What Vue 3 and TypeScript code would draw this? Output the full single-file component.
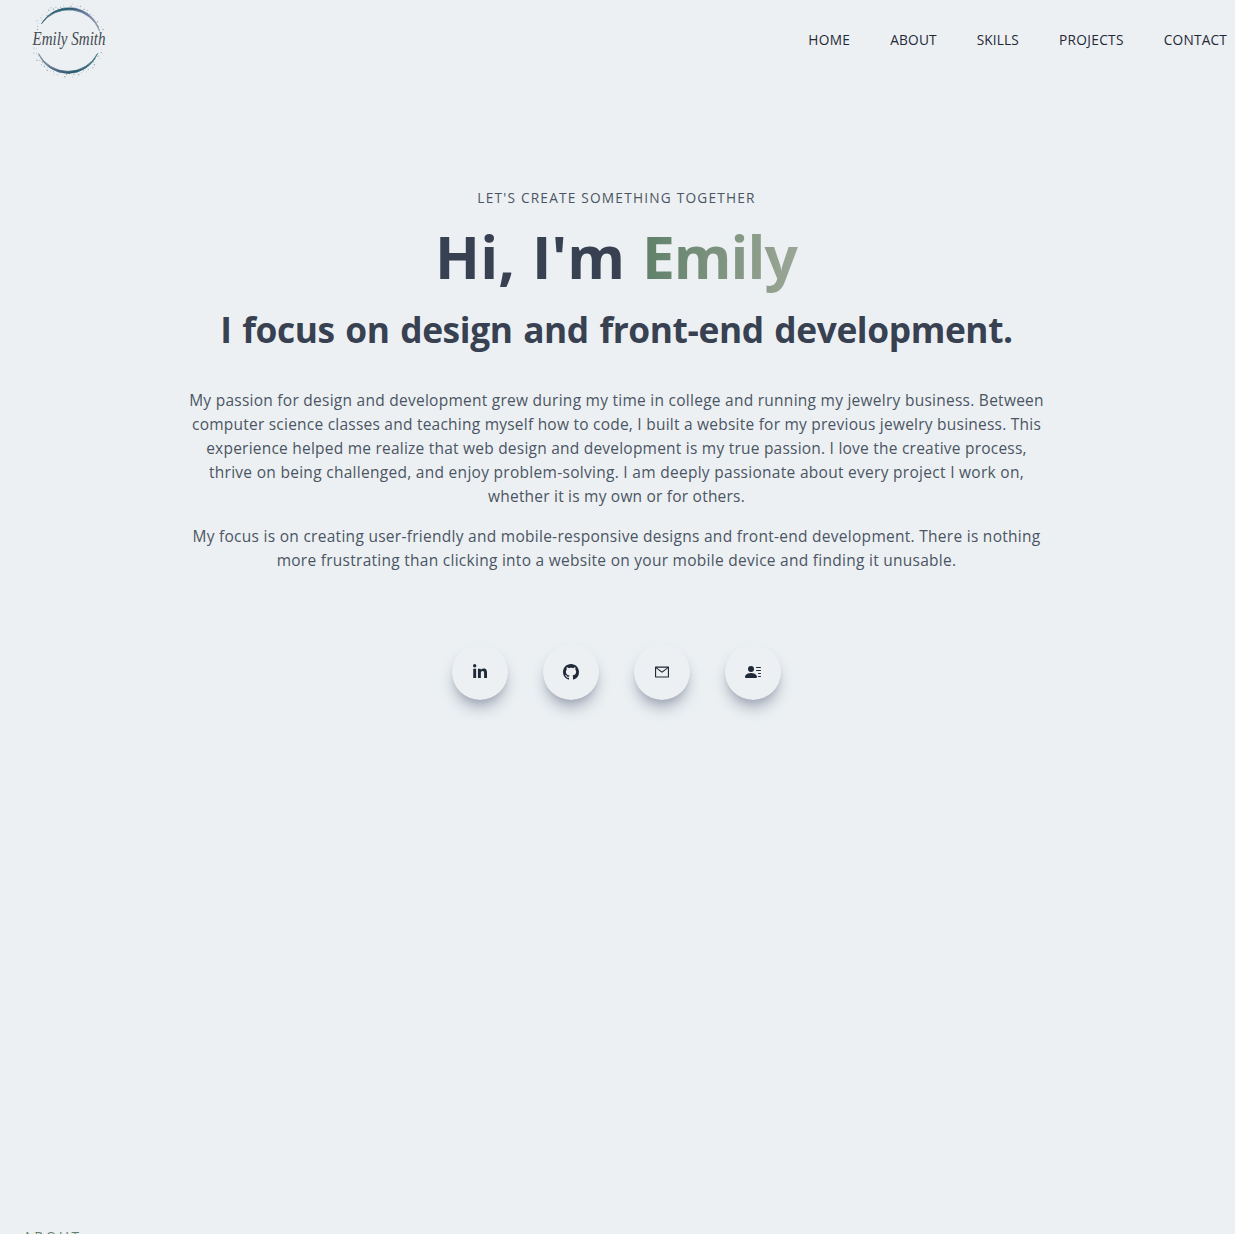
<script setup lang="ts">
interface Line {
  text: string
  spacing: number
}

const navItems: Line[] = [
  { text: 'HOME', spacing: 0.35 },
  { text: 'ABOUT', spacing: 0.16 },
  { text: 'SKILLS', spacing: 0.1 },
  { text: 'PROJECTS', spacing: 0.33 },
  { text: 'CONTACT', spacing: 0.18 },
]

const paragraphs: Line[][] = [
  [
    { text: 'My passion for design and development grew during my time in college and running my jewelry business. Between', spacing: 0.26 },
    { text: 'computer science classes and teaching myself how to code, I built a website for my previous jewelry business. This', spacing: 0.232 },
    { text: 'experience helped me realize that web design and development is my true passion. I love the creative process,', spacing: 0.225 },
    { text: 'thrive on being challenged, and enjoy problem-solving. I am deeply passionate about every project I work on,', spacing: 0.288 },
    { text: 'whether it is my own or for others.', spacing: 0.21 },
  ],
  [
    { text: 'My focus is on creating user-friendly and mobile-responsive designs and front-end development. There is nothing', spacing: 0.277 },
    { text: 'more frustrating than clicking into a website on your mobile device and finding it unusable.', spacing: 0.27 },
  ],
]

interface Icon {
  name: string
  viewBox: string
  path: string
}

const icons: Icon[] = [
  {
    name: 'LinkedIn',
    viewBox: '-32 0 512 512',
    path: 'M100.28 448H7.4V148.9h92.88zM53.79 108.1C24.09 108.1 0 83.5 0 53.8a53.79 53.79 0 0 1 107.58 0c0 29.7-24.1 54.3-53.79 54.3zM447.9 448h-92.68V302.4c0-34.7-.7-79.2-48.29-79.2-48.29 0-55.69 37.7-55.69 76.7V448h-92.78V148.9h89.08v40.8h1.3c12.4-23.5 42.69-48.3 87.88-48.3 94 0 111.28 61.9 111.28 142.3V448z',
  },
  {
    name: 'GitHub',
    viewBox: '0 0 16 16',
    path: 'M8 0C3.58 0 0 3.58 0 8c0 3.54 2.29 6.53 5.47 7.59.4.07.55-.17.55-.38 0-.19-.01-.82-.01-1.49-2.01.37-2.53-.49-2.69-.94-.09-.23-.48-.94-.82-1.13-.28-.15-.68-.52-.01-.53.63-.01 1.08.58 1.23.82.72 1.21 1.87.87 2.33.66.07-.52.28-.87.51-1.07-1.78-.2-3.64-.89-3.64-3.95 0-.87.31-1.59.82-2.15-.08-.2-.36-1.02.08-2.12 0 0 .67-.21 2.2.82.64-.18 1.32-.27 2-.27s1.36.09 2 .27c1.53-1.04 2.2-.82 2.2-.82.44 1.1.16 1.92.08 2.12.51.56.82 1.27.82 2.15 0 3.07-1.87 3.75-3.65 3.95.29.25.54.73.54 1.48 0 1.07-.01 1.93-.01 2.2 0 .21.15.46.55.38A8.01 8.01 0 0 0 16 8c0-4.42-3.58-8-8-8z',
  },
  {
    name: 'Email',
    viewBox: '0 0 1024 1024',
    path: 'M928 160H96c-17.700 0-32 14.300-32 32v640c0 17.700 14.300 32 32 32h832c17.700 0 32-14.300 32-32V192c0-17.700-14.300-32-32-32zm-40 110.800V792H136V270.800l-27.600-21.500 39.300-50.500 42.800 33.300h643.100l42.800-33.300 39.300 50.500-27.700 21.500zM833.600 232L512 482 190.400 232l-42.800-33.300-39.300 50.500 27.600 21.500 341.600 265.600a55.990 55.990 0 0 0 68.700 0L888 270.800l27.600-21.500-39.300-50.500-42.700 33.200z',
  },
  {
    name: 'Resume',
    viewBox: '0 0 16 16',
    path: 'M6 8a3 3 0 1 0 0-6 3 3 0 0 0 0 6zm-5 6s-1 0-1-1 1-4 6-4 6 3 6 4-1 1-1 1H1zM11 3.500a.5.5 0 0 1 .5-.5h4a.5.5 0 0 1 0 1h-4a.5.5 0 0 1-.5-.5zm.5 2.500a.5.5 0 0 0 0 1h4a.5.5 0 0 0 0-1h-4zm2 3a.5.5 0 0 0 0 1h2a.5.5 0 0 0 0-1h-2zm0 3a.5.5 0 0 0 0 1h2a.5.5 0 0 0 0-1h-2z',
  },
]

interface Dot {
  x: number
  y: number
  r: number
}

// Speckles scattered just outside the logo ring.
const dots: Dot[] = Array.from({ length: 90 }, (_, i) => {
  const angle = (i * 137.5 * Math.PI) / 180
  const distance = 32.5 + ((i * 7) % 10) * 0.48
  return {
    x: 48 + Math.cos(angle) * distance,
    y: 40.5 + Math.sin(angle) * distance,
    r: 0.4 + (i % 3) * 0.15,
  }
}).filter((d) => Math.abs(d.y - 39) > 9)
</script>

<template>
  <div class="page">
    <header class="bar">
      <svg class="logo" viewBox="0 0 100 80" role="img" aria-label="Emily Smith">
        <defs>
          <linearGradient id="ringTop" x1="0" y1="0" x2="1" y2="0">
            <stop offset="0" stop-color="#2f6577" />
            <stop offset="0.5" stop-color="#2b5c72" />
            <stop offset="0.75" stop-color="#66739a" />
            <stop offset="1" stop-color="#8d99a5" />
          </linearGradient>
          <linearGradient id="ringBottom" x1="0" y1="0" x2="1" y2="0">
            <stop offset="0" stop-color="#76869d" />
            <stop offset="0.3" stop-color="#48647f" />
            <stop offset="0.6" stop-color="#275b6e" />
            <stop offset="1" stop-color="#3f7482" />
          </linearGradient>
        </defs>
        <circle v-for="(d, i) in dots" :key="i" :cx="d.x" :cy="d.y" :r="d.r" fill="#7f95a3" opacity="0.8" />
        <path d="M21.500 23.800A31.700 31.700 0 0 1 79.700 31.300A33.200 33.200 0 0 0 21.500 23.800Z" fill="url(#ringTop)" stroke="url(#ringTop)" stroke-width="0.7" />
        <path d="M18.500 53.500A31.800 31.800 0 0 0 77.500 53.500A33.300 33.300 0 0 1 18.500 53.500Z" fill="url(#ringBottom)" stroke="url(#ringBottom)" stroke-width="0.7" />
        <text class="signature" x="12.5" y="45" textLength="73" lengthAdjust="spacingAndGlyphs">Emily Smith</text>
      </svg>
      <nav class="nav">
        <a v-for="item in navItems" :key="item.text" :style="{ letterSpacing: item.spacing + 'px' }">{{ item.text }}</a>
      </nav>
    </header>

    <main class="hero">
      <p class="eyebrow">LET'S CREATE SOMETHING TOGETHER</p>
      <h1>Hi, I'm <span class="name">Emily</span></h1>
      <h2>I focus on design and front-end development.</h2>
      <div class="copy">
        <p v-for="(lines, p) in paragraphs" :key="p">
          <span v-for="line in lines" :key="line.text" class="line" :style="{ letterSpacing: line.spacing + 'px' }">{{ line.text }}</span>
        </p>
      </div>
      <div class="links">
        <a v-for="icon in icons" :key="icon.name" class="link" :aria-label="icon.name">
          <svg :viewBox="icon.viewBox" width="16" height="16" fill="currentColor"><path :d="icon.path" /></svg>
        </a>
      </div>
    </main>

    <section class="about">
      <p>ABOUT</p>
    </section>
  </div>
</template>

<style>
body {
  background: #ecf0f3;
}
</style>

<style scoped>
.page {
  display: flex;
  flex-direction: column;
  box-sizing: border-box;
  height: 1234px;
  overflow: hidden;
  background: #ecf0f3;
  color: #374151;
  font-family: "Open Sans", sans-serif;
}

p,
h1,
h2 {
  margin: 0;
}

.bar {
  display: flex;
  align-items: center;
  justify-content: space-between;
  height: 80px;
  padding: 0 8px 0 20px;
  flex: none;
}

.logo {
  width: 100px;
  height: 80px;
}

.signature {
  font: italic 19px "Liberation Serif", serif;
  fill: #444b51;
}

.nav {
  display: flex;
  gap: 40px;
  color: #1f2937;
  font-size: 13.7px;
  line-height: 20px;
}

.hero {
  display: flex;
  flex-direction: column;
  align-items: center;
  padding: 108px 2px 0 0;
  text-align: center;
  white-space: nowrap;
}

.eyebrow {
  color: #4b5563;
  font-size: 13.7px;
  line-height: 20px;
  letter-spacing: 1.2px;
}

h1 {
  margin-top: 18px;
  font-size: 58.8px;
  line-height: 60px;
  letter-spacing: 0.1px;
  word-spacing: 1.5px;
}

.name {
  padding-right: 1px;
  background: linear-gradient(to right, #5f8069, #9ca796);
  background-clip: text;
  -webkit-background-clip: text;
  color: transparent;
  letter-spacing: -1px;
}

h2 {
  margin-top: 23px;
  font-size: 35.3px;
  line-height: 40px;
  letter-spacing: -0.4px;
  word-spacing: 1.9px;
}

.copy {
  display: flex;
  flex-direction: column;
  gap: 16px;
  margin-top: 39px;
  color: #4b5563;
  font-size: 15.5px;
  line-height: 24px;
}

.line {
  display: block;
}

.links {
  display: flex;
  gap: 35px;
  margin-top: 72px;
}

.link {
  display: flex;
  align-items: center;
  justify-content: center;
  width: 56px;
  height: 56px;
  border-radius: 50%;
  color: #1f2937;
  box-shadow: 0 10px 15px -3px #a3abb8, 0 4px 6px -4px #9ca3b3;
}

.about {
  margin-top: 527px;
  padding-left: 23px;
  color: #5f8069;
  font-size: 13.7px;
  line-height: 20px;
  letter-spacing: 2.6px;
}
</style>
